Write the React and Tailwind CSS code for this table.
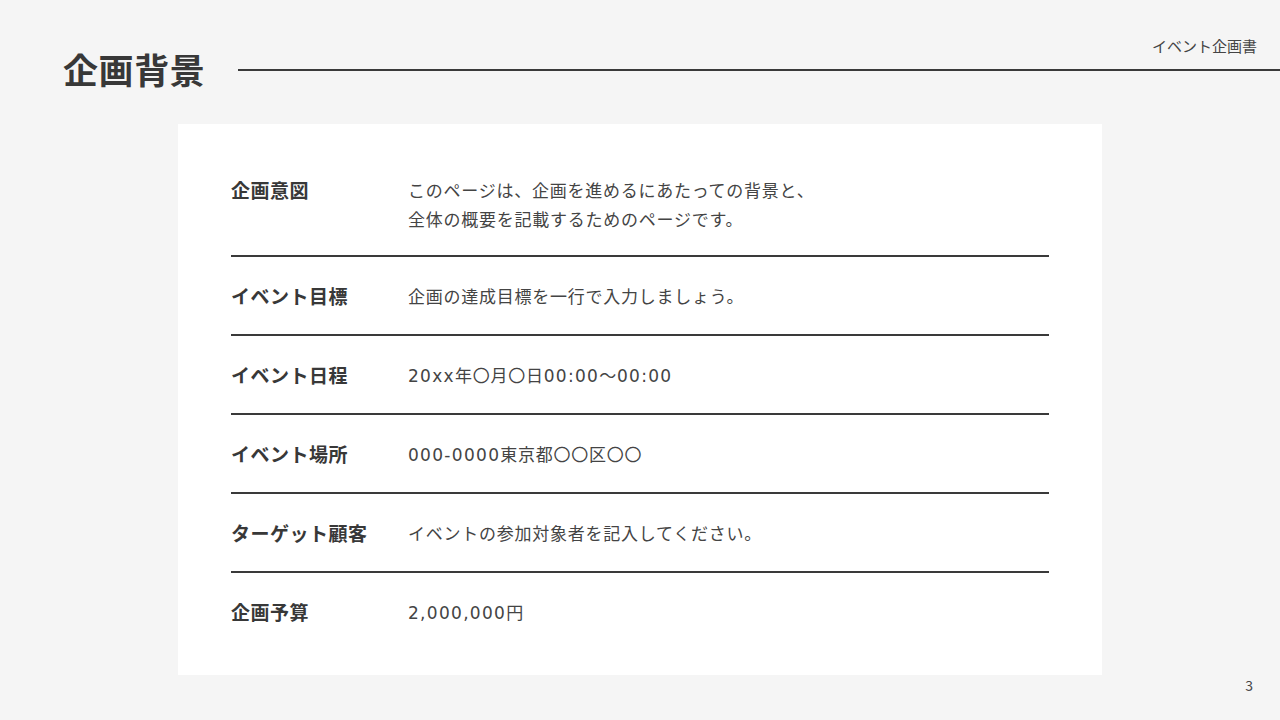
import React from "react";

const rows = [
  { label: "企画意図", value: ["このページは、企画を進めるにあたっての背景と、", "全体の概要を記載するためのページです。"] },
  { label: "イベント目標", value: ["企画の達成目標を一行で入力しましょう。"] },
  { label: "イベント日程", value: ["20xx年〇月〇日00:00～00:00"] },
  { label: "イベント場所", value: ["000-0000東京都〇〇区〇〇"] },
  { label: "ターゲット顧客", value: ["イベントの参加対象者を記入してください。"] },
  { label: "企画予算", value: ["2,000,000円"] },
];

function Mixed({ text }) {
  const parts = text.split(/([0-9x:,\-]+)/);
  return parts.map((p, i) =>
    /^[0-9x:,\-]+$/.test(p) ? (
      <span key={i} className="tracking-[1.3px] leading-none" style={{ fontFamily: '"DejaVu Sans", sans-serif' }}>
        {p}
      </span>
    ) : (
      <span key={i}>{p}</span>
    )
  );
}

export default function App() {
  return (
    <div
      className="w-[1280px] h-[720px] bg-[#f5f5f5] overflow-hidden text-[#333333]"
      style={{ fontFamily: '"Noto Sans CJK JP", "Noto Sans", sans-serif' }}
    >
      <header className="flex items-start">
        <h1 className="ml-[63px] mt-[49px] text-[35px] leading-[40px] tracking-[0.6px] font-bold text-[#383838]">企画背景</h1>
        <div className="flex-1 ml-[33px] flex flex-col">
          <div className="pt-[36px] pr-[23px] text-right text-[15px] leading-[20px] text-[#444444]">イベント企画書</div>
          <div className="mt-[13px] h-[2px] bg-[#3a3a3a]" />
        </div>
      </header>

      <main className="mx-auto mt-[35px] w-[924px] bg-white px-[53px] pt-[27px] pb-[25px]">
        {rows.map((r, i) => (
          <div
            key={i}
            className={
              "flex pt-[24px] " +
              (i === 0 ? "pb-[22px] " : "pb-[24px] ") +
              (i < rows.length - 1 ? "border-b-2 border-[#3a3a3a]" : "")
            }
          >
            <div className="w-[177px] shrink-0 text-[19px] leading-[29px] tracking-[0.5px] font-bold text-[#383838]">{r.label}</div>
            <div className="text-[17px] leading-[29px] tracking-[0.75px] text-[#444444]">
              {r.value.map((v, j) => (
                <div key={j} className="h-[29px]">
                  <Mixed text={v} />
                </div>
              ))}
            </div>
          </div>
        ))}
      </main>

      <div className="flex justify-end pr-[27px] mt-[1px] text-[14px] leading-[18px] text-[#444444]">3</div>
    </div>
  );
}
